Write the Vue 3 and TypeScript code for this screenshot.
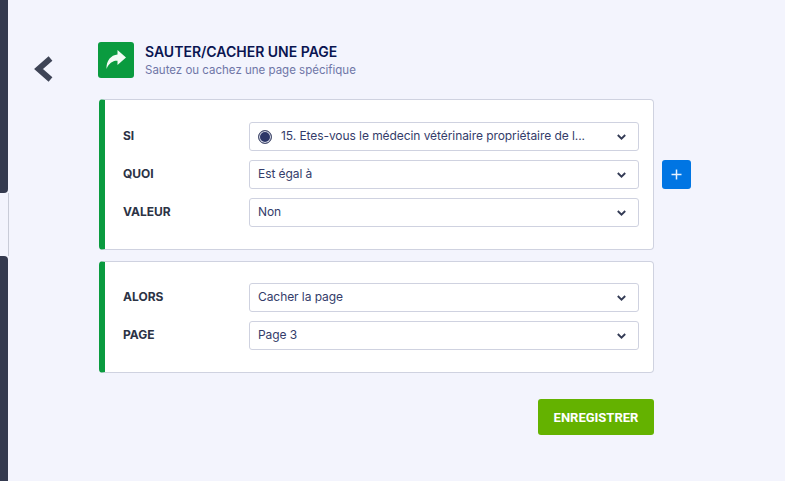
<template>
  <div class="page">
    <!-- Bord du panneau latéral -->
    <aside class="rail">
      <div class="rail-part rail-top"></div>
      <div class="rail-gap"></div>
      <div class="rail-part rail-bottom"></div>
    </aside>

    <button class="back" type="button" aria-label="Retour">
      <svg width="20" height="26" viewBox="0 0 20 26">
        <path d="M17.5 2.5 L5.5 13 L17.5 23.5" fill="none" stroke="#3e4456" stroke-width="5.8" />
      </svg>
    </button>

    <main class="content">
      <header class="head">
        <div class="head-icon">
          <svg width="20" height="20" viewBox="0 0 20 20">
            <path d="M11.5 0 L20 7.5 L11.5 15 V10.8 C7 10.4 3 13 0.5 19 C0 10.5 5 5 11.5 4.4 Z" fill="#f2fbf4" />
          </svg>
        </div>
        <div class="head-text">
          <h1>SAUTER/CACHER UNE PAGE</h1>
          <p>Sautez ou cachez une page spécifique</p>
        </div>
      </header>

      <div class="with-add">
        <section class="card">
          <div v-for="row in conditionRows" :key="row.label" class="row">
            <label>{{ row.label }}</label>
            <div class="select">
              <span v-if="row.radio" class="radio"></span>
              <span class="value">{{ row.value }}</span>
              <svg class="chevron" width="9" height="6" viewBox="0 0 9 6">
                <path d="M0.8 1 L4.5 4.6 L8.2 1" fill="none" stroke="#343b55" stroke-width="1.9" />
              </svg>
            </div>
          </div>
        </section>
        <button class="add" type="button" aria-label="Ajouter">
          <svg width="11" height="11" viewBox="0 0 11 11">
            <path d="M5.5 0.5 V10.5 M0.5 5.5 H10.5" stroke="#e6f2ff" stroke-width="1.5" />
          </svg>
        </button>
      </div>

      <section class="card second">
        <div v-for="row in actionRows" :key="row.label" class="row">
          <label>{{ row.label }}</label>
          <div class="select">
            <span class="value">{{ row.value }}</span>
            <svg class="chevron" width="9" height="6" viewBox="0 0 9 6">
              <path d="M0.8 1 L4.5 4.6 L8.2 1" fill="none" stroke="#343b55" stroke-width="1.9" />
            </svg>
          </div>
        </div>
      </section>

      <div class="actions">
        <button class="save" type="button">ENREGISTRER</button>
      </div>
    </main>
  </div>
</template>

<script setup lang="ts">
interface Row {
  label: string;
  value: string;
  radio?: boolean;
}

const conditionRows: Row[] = [
  { label: 'SI', value: '15. Etes-vous le médecin vétérinaire propriétaire de l...', radio: true },
  { label: 'QUOI', value: 'Est égal à' },
  { label: 'VALEUR', value: 'Non' },
];

const actionRows: Row[] = [
  { label: 'ALORS', value: 'Cacher la page' },
  { label: 'PAGE', value: 'Page 3' },
];
</script>

<style>
html,
body {
  margin: 0;
  background: #f3f4fd;
}
</style>

<style scoped>
.page {
  display: flex;
  height: 481px;
  overflow: hidden;
  background: #f3f4fd;
  font-family: Inter, 'Noto Sans', sans-serif;
  color: #0a1551;
}

.rail {
  display: flex;
  flex-direction: column;
  width: 8px;
  flex: none;
}

.rail-part {
  background: #343a4f;
}

.rail-top {
  height: 193px;
  border-bottom-right-radius: 4px;
}

.rail-gap {
  height: 63px;
  border-right: 1px solid #c9ccd8;
  width: 9px;
  box-sizing: border-box;
}

.rail-bottom {
  flex: 1;
  border-top-right-radius: 4px;
}

.back {
  flex: none;
  align-self: flex-start;
  display: flex;
  width: 20px;
  height: 26px;
  margin: 56px 0 0 25px;
  padding: 0;
  border: 0;
  background: none;
}

.content {
  width: 633px;
  margin-left: 45px;
  padding-top: 42px;
  flex: none;
}

.head {
  display: flex;
  align-items: center;
  gap: 11px;
  margin-bottom: 21px;
}

.head-icon {
  display: flex;
  align-items: center;
  justify-content: center;
  width: 36px;
  height: 36px;
  border-radius: 3px;
  background: #0a9b3f;
}

.head-text {
  padding-top: 2px;
}

h1 {
  margin: 0 0 3px;
  font-size: 14px;
  line-height: 16px;
  font-weight: 600;
  color: #0a1551;
}

p {
  margin: 0;
  font-size: 11.5px;
  line-height: 15px;
  color: #6f76a7;
}

.with-add {
  display: flex;
  align-items: center;
  gap: 8px;
  margin-left: 1px;
}

.card {
  box-sizing: border-box;
  width: 555px;
  padding: 22px 14px 22px 18px;
  background: #fff;
  border: 1px solid #cfd2e0;
  border-left: 6px solid #0a9b3f;
  border-radius: 4px;
  display: flex;
  flex-direction: column;
  gap: 9px;
}

.second {
  margin: 11px 0 26px 1px;
  padding-top: 21px;
}

.row {
  display: flex;
  align-items: center;
}

label {
  width: 126px;
  flex: none;
  padding-bottom: 2px;
  font-size: 12px;
  font-weight: 700;
  color: #2c3345;
}

.select {
  box-sizing: border-box;
  display: flex;
  align-items: center;
  width: 390px;
  height: 29px;
  padding: 0 12px 0 8px;
  background: #fff;
  border: 1px solid #cfd2e0;
  border-radius: 3px;
  font-size: 12px;
  color: #343c6a;
}

.value {
  flex: 1;
  padding-bottom: 2px;
  white-space: nowrap;
  letter-spacing: -0.07px;
}

.radio {
  box-sizing: border-box;
  width: 14px;
  height: 14px;
  margin-right: 9px;
  border-radius: 50%;
  border: 1.5px solid #4a5170;
  background: #2d3768;
  box-shadow: inset 0 0 0 1px #dfe1ec;
}

.chevron {
  flex: none;
}

.add {
  display: flex;
  align-items: center;
  justify-content: center;
  width: 29px;
  height: 29px;
  padding: 0;
  border: 0;
  border-radius: 3px;
  background: #0075e3;
}

.actions {
  display: flex;
  justify-content: flex-end;
  width: 556px;
}

.save {
  width: 116px;
  height: 36px;
  padding: 0;
  border: 0;
  border-radius: 3px;
  background: #64b200;
  color: #fff;
  font-family: Roboto, sans-serif;
  font-size: 13px;
  font-weight: 700;
}
</style>
